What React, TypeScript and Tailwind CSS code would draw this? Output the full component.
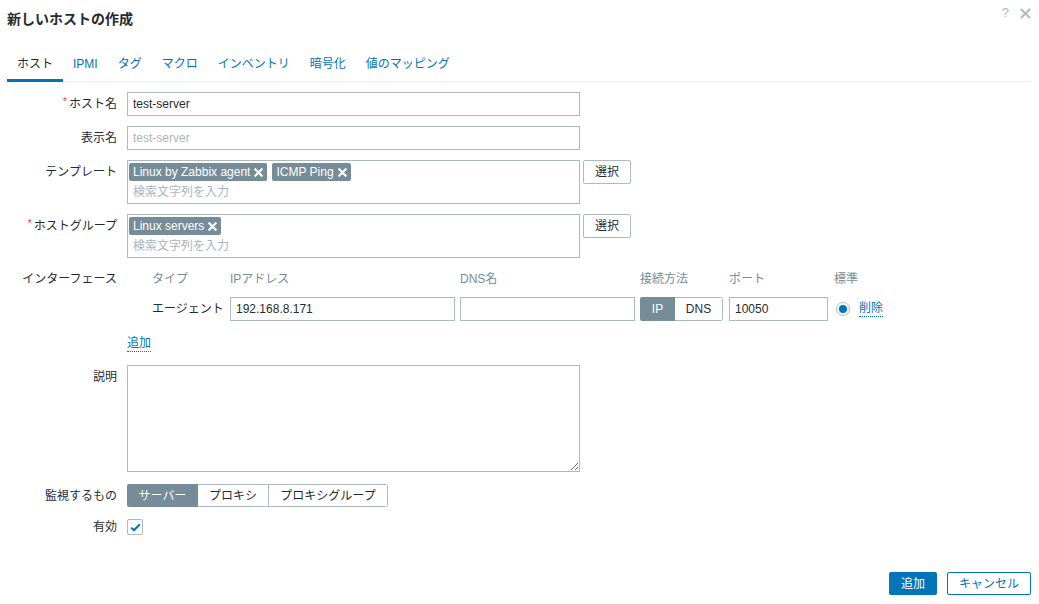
import React from "react";

const font = { fontFamily: '"Liberation Sans", Arial, "Noto Sans CJK JP", sans-serif' };

function XIcon({ size = 8, color = "#ffffff", sw = 2.2 }: { size?: number; color?: string; sw?: number }) {
  return (
    <svg width={size} height={size} viewBox="0 0 10 10" className="shrink-0">
      <path d="M1.5 1.5 L8.5 8.5 M8.5 1.5 L1.5 8.5" stroke={color} strokeWidth={sw} strokeLinecap="square" />
    </svg>
  );
}

function Label({ children, required, h = "h-[24px]" }: { children: React.ReactNode; required?: boolean; h?: string }) {
  return (
    <div className={`w-[110px] shrink-0 flex items-center justify-end ${h} leading-[24px]`}>
      {required && <span className="text-[#e33734] mr-[2px] text-[10px] relative -top-[2px]">*</span>}
      <span>{children}</span>
    </div>
  );
}

function Tag({ text }: { text: string }) {
  return (
    <div className="h-[18px] flex items-center gap-[4px] bg-[#768d99] text-white rounded-[2px] px-[4px] leading-[18px]">
      <span>{text}</span>
      <XIcon size={9} sw={2.4} />
    </div>
  );
}

function MultiSelect({ tags }: { tags: string[] }) {
  return (
    <div className="flex items-start gap-[3px]">
      <div className="w-[453px] h-[44px] border border-[#acbbc2] bg-white pt-[2px] pl-[1px]">
        <div className="flex gap-[5px]">
          {tags.map((t) => (
            <Tag key={t} text={t} />
          ))}
        </div>
        <div className="h-[21px] leading-[22px] pl-[4px] text-[#a9b5bb]">検索文字列を入力</div>
      </div>
      <div className="w-[48px] h-[24px] border border-[#acbbc2] rounded-[2px] bg-white flex items-center justify-center text-[#1f2c33]">
        選択
      </div>
    </div>
  );
}

export default function App() {
  return (
    <div className="w-[1039px] h-[604px] bg-white text-[12px] text-[#1f2c33] pl-[7px] pr-[8px] relative" style={font}>
      {/* Title */}
      <div className="pt-[10px] h-[28px] flex items-center justify-between">
        <div className="text-[14px] font-bold leading-[18px] text-[#1f2c33]">新しいホストの作成</div>
      </div>
      <div className="absolute right-[8px] top-[6px] flex items-center gap-[11px] text-[#aab8bf]">
        <span className="text-[13px] leading-[14px]">?</span>
        <XIcon size={11} color="#aab8bf" sw={1.8} />
      </div>

      {/* Tabs */}
      <div className="mt-[22px] h-[32px] border-b border-[#ebeef0] flex">
        {[
          "ホスト",
          "IPMI",
          "タグ",
          "マクロ",
          "インベントリ",
          "暗号化",
          "値のマッピング",
        ].map((t, i) => (
          <div
            key={t}
            className={`h-[32px] px-[10px] leading-[29px] border-b-[3px] ${
              i === 0 ? "border-[#0275b8] text-[#1f2c33]" : "border-transparent text-[#0275b8]"
            }`}
          >
            {t}
          </div>
        ))}
      </div>

      {/* Form */}
      <div className="mt-[10px] flex flex-col">
        <div className="flex gap-[10px]">
          <Label required>ホスト名</Label>
          <div className="w-[453px] h-[24px] border border-[#acbbc2] px-[5px] leading-[22px]">test-server</div>
        </div>
        <div className="flex gap-[10px] mt-[10px]">
          <Label>表示名</Label>
          <div className="w-[453px] h-[24px] border border-[#acbbc2] px-[5px] leading-[22px] text-[#a9b5bb]">
            test-server
          </div>
        </div>
        <div className="flex gap-[10px] mt-[10px]">
          <Label>テンプレート</Label>
          <MultiSelect tags={["Linux by Zabbix agent", "ICMP Ping"]} />
        </div>
        <div className="flex gap-[10px] mt-[10px]">
          <Label required>ホストグループ</Label>
          <MultiSelect tags={["Linux servers"]} />
        </div>

        {/* Interfaces */}
        <div className="flex gap-[10px] mt-[9px]">
          <Label>インターフェース</Label>
          <div className="pl-[25px]">
            <div className="grid grid-cols-[78px_230px_180px_89px_105px_auto] h-[24px] items-center text-[#768d99]">
              <div>タイプ</div>
              <div>IPアドレス</div>
              <div>DNS名</div>
              <div>接続方法</div>
              <div>ポート</div>
              <div>標準</div>
            </div>
            <div className="grid grid-cols-[78px_230px_180px_89px_105px_auto] h-[24px] items-center mt-[6px]">
              <div>エージェント</div>
              <div className="w-[225px] h-[24px] border border-[#acbbc2] px-[5px] leading-[22px]">192.168.8.171</div>
              <div className="w-[175px] h-[24px] border border-[#acbbc2]"></div>
              <div className="w-[83px] h-[24px] flex rounded-[2px] overflow-hidden">
                <div className="w-[35px] bg-[#768d99] text-white flex items-center justify-center">IP</div>
                <div className="flex-1 border border-l-0 border-[#acbbc2] rounded-r-[2px] flex items-center justify-center">
                  DNS
                </div>
              </div>
              <div className="w-[99px] h-[24px] border border-[#acbbc2] px-[5px] leading-[22px]">10050</div>
              <div className="flex items-center gap-[9px] pl-[2px]">
                <div className="w-[14px] h-[14px] rounded-full border border-[#acbbc2] flex items-center justify-center bg-white">
                  <div className="w-[8px] h-[8px] rounded-full bg-[#0275b8]"></div>
                </div>
                <span className="text-[#0275b8] border-b border-dotted border-[#0275b8] leading-[15px]">削除</span>
              </div>
            </div>
          </div>
        </div>

        <div className="flex gap-[10px] mt-[13px] h-[20px] items-center">
          <div className="w-[110px] shrink-0"></div>
          <span className="text-[#0275b8] border-b border-dotted border-[#0275b8] leading-[15px]">追加</span>
        </div>

        <div className="flex gap-[10px] mt-[11px]">
          <Label>説明</Label>
          <textarea
            readOnly
            className="w-[453px] h-[107px] border border-[#acbbc2] resize-y outline-none bg-white block"
          ></textarea>
        </div>

        <div className="flex gap-[10px] mt-[12px]">
          <Label h="h-[23px]">監視するもの</Label>
          <div className="flex h-[23px] rounded-[2px] overflow-hidden">
            <div className="w-[71px] bg-[#768d99] text-white flex items-center justify-center">サーバー</div>
            <div className="w-[71px] border-y border-r border-[#acbbc2] flex items-center justify-center">プロキシ</div>
            <div className="w-[119px] border-y border-r border-[#acbbc2] rounded-r-[2px] flex items-center justify-center">
              プロキシグループ
            </div>
          </div>
        </div>

        <div className="flex gap-[10px] mt-[12px]">
          <Label h="h-[16px]">有効</Label>
          <div className="w-[16px] h-[16px] border border-[#acbbc2] rounded-[2px] flex items-center justify-center bg-white">
            <svg width="11" height="9" viewBox="0 0 11 9">
              <path d="M1.2 4.6 L4 7.3 L9.8 1.3" stroke="#0275b8" strokeWidth="2" fill="none" />
            </svg>
          </div>
        </div>
      </div>

      {/* Footer */}
      <div className="mt-[37px] flex justify-end gap-[10px]">
        <div className="w-[48px] h-[23px] bg-[#0275b8] text-white rounded-[2px] flex items-center justify-center">追加</div>
        <div className="w-[84px] h-[23px] border border-[#0275b8] text-[#0275b8] rounded-[2px] flex items-center justify-center bg-white">
          キャンセル
        </div>
      </div>
    </div>
  );
}
